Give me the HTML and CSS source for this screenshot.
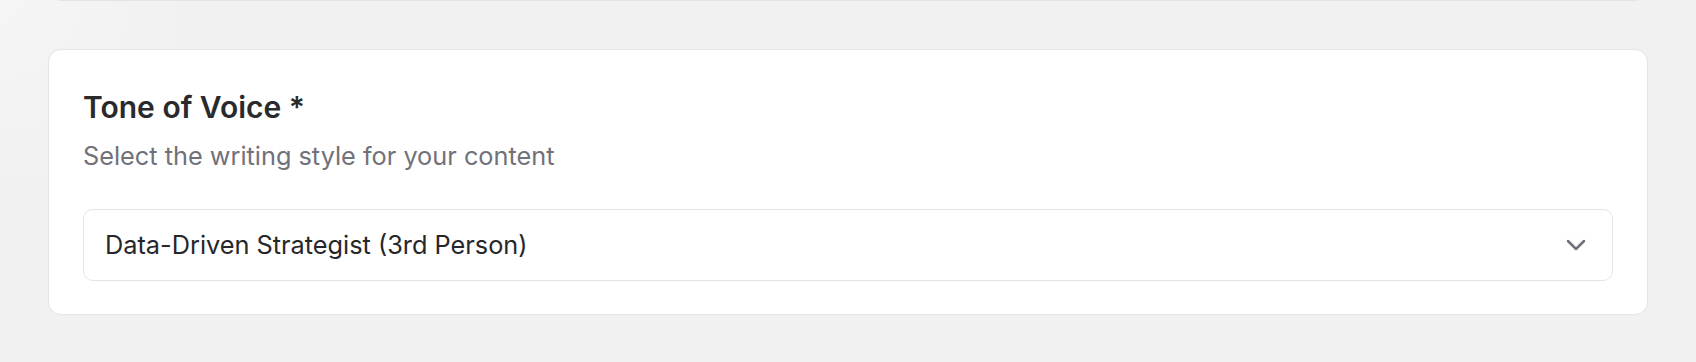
FILE: index.html
```html
<!DOCTYPE html>
<html lang="en">
<head>
<meta charset="utf-8">
<title>Tone of Voice</title>
<link rel="stylesheet" href="styles.css">
</head>
<body>
<main class="page">
  <div class="card card-prev"></div>
  <section class="card">
    <h2 class="card-title">Tone of Voice *</h2>
    <p class="card-desc">Select the writing style for your content</p>
    <div class="select">
      <span class="select-value">Data-Driven Strategist (3rd Person)</span>
      <svg class="select-chevron" width="20" height="12" viewBox="0 0 20 12" aria-hidden="true">
        <polyline points="2,2 10,10 18,2" fill="none" stroke="currentColor" stroke-width="2.5" stroke-linecap="round" stroke-linejoin="round"/>
      </svg>
    </div>
  </section>
</main>
</body>
</html>
```

FILE: styles.css
```css
* { box-sizing: border-box; }

html, body {
  margin: 0;
  padding: 0;
}

body {
  width: 1696px;
  height: 362px;
  overflow: hidden;
  font-family: Inter, "Noto Sans", "Liberation Sans", sans-serif;
  background-color: #f1f1f1;
  background-image:
    radial-gradient(circle at 0 0, rgba(255,255,255,0.3), rgba(255,255,255,0) 200px);
}

.page {
  display: flex;
  flex-direction: column;
  gap: 48px;
  padding: 0 48px;
}

.card {
  background: #ffffff;
  border: 1px solid #e4e4e7;
  border-radius: 13px;
  padding: 34px 34px 33px;
}

.card-prev {
  height: 40px;
  margin-top: -39px;
  padding: 0;
}

.card-title {
  margin: 0;
  font-size: 30px;
  line-height: 46px;
  font-weight: 600;
  color: #2a2a2d;
}

.card-desc {
  margin: 8px 0 0;
  font-size: 25.3px;
  line-height: 36px;
  color: #71717a;
}

.select {
  margin-top: 35px;
  height: 72px;
  border: 1px solid #e4e4e7;
  border-radius: 10px;
  display: flex;
  align-items: center;
  justify-content: space-between;
  padding: 0 26px 0 21px;
}

.select-value {
  font-size: 25.3px;
  line-height: 36px;
  color: #27272a;
}

.select-chevron {
  color: #71717a;
}
```
